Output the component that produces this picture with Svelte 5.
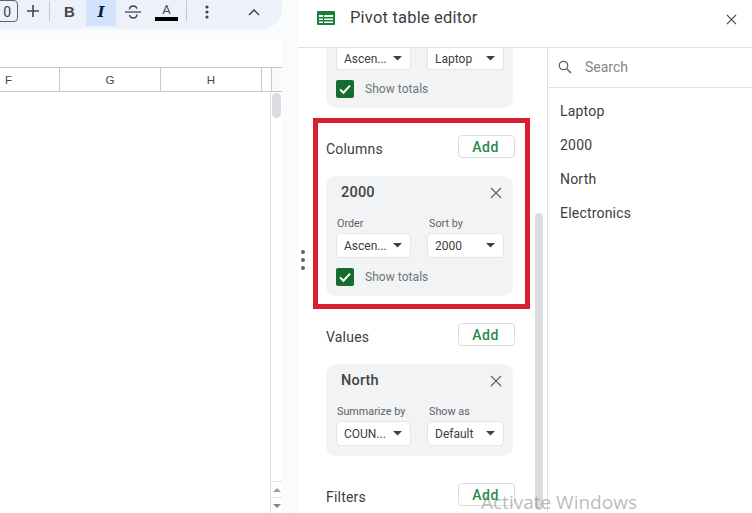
<script>
  const cols = [
    { name: 'F', cls: 'cf' },
    { name: 'G', cls: 'cg' },
    { name: 'H', cls: 'cg' }
  ];
  const fields = ['Laptop', '2000', 'North', 'Electronics'];
</script>

{#snippet caret()}
  <svg class="caret" width="9" height="4.500" viewBox="0 0 10 5"><path d="M0 0h10L5 5z" fill="#3c4043" /></svg>
{/snippet}

{#snippet select(text, cls)}
  <div class="select {cls}"><span>{text}</span>{@render caret()}</div>
{/snippet}

{#snippet totals()}
  <div class="totals">
    <span class="check">
      <svg width="18" height="18" viewBox="0 0 18 18"><path d="M4 9.400l3.400 3.400L14 5.600" fill="none" stroke="#fff" stroke-width="2" /></svg>
    </span>
    <span class="totals-label">Show totals</span>
  </div>
{/snippet}

{#snippet cross(size, col)}
  <svg width={size} height={size} viewBox="0 0 12 12"><path d="M1 1l10 10M11 1L1 11" fill="none" stroke={col} stroke-width="1.200" /></svg>
{/snippet}

<div class="page">
  <div class="sheet">
    <div class="toolbar">
      <span class="fontsize">0</span>
      <svg class="plus" width="12" height="12" viewBox="0 0 12 12"><path d="M6 0v12M0 6h12" stroke="#444746" stroke-width="1.600" /></svg>
      <span class="sep s1"></span>
      <span class="tb bold">B</span>
      <span class="tb italic">I</span>
      <svg class="strike" width="18" height="16" viewBox="0 0 18 16"><path d="M0 8h16" stroke="#444746" stroke-width="1.300" /><path d="M4.500 5.500C4.800 3 6.500 2 8.200 2s3.200.8 3.700 2.600M12 10.500c-.2 2.200-1.800 3.500-3.800 3.500S4.800 12.800 4.500 11" fill="none" stroke="#444746" stroke-width="1.500" /></svg>
      <span class="color"><span class="a">A</span><span class="bar"></span></span>
      <span class="sep s2"></span>
      <svg class="more" width="4" height="14" viewBox="0 0 4 14"><circle cx="2" cy="2" r="1.600" fill="#444746" /><circle cx="2" cy="7" r="1.600" fill="#444746" /><circle cx="2" cy="12" r="1.600" fill="#444746" /></svg>
      <svg class="up" width="12" height="7" viewBox="0 0 12 7"><path d="M1 6l5-5 5 5" fill="none" stroke="#444746" stroke-width="1.500" /></svg>
    </div>
    <div class="grid">
      <div class="formula"></div>
      <div class="headers">
        {#each cols as c}
          <div class="col {c.cls}">{c.name}</div>
        {/each}
        <div class="col-rest"></div>
      </div>
      <div class="cells">
        <div class="cells-main"></div>
        <div class="vscroll">
          <div class="track"><div class="thumb"></div></div>
          <div class="arrow"><svg width="8" height="4" viewBox="0 0 8 4"><path d="M0 4h8L4 0z" fill="#9aa0a6" /></svg></div>
          <div class="arrow"><svg width="8" height="4" viewBox="0 0 8 4"><path d="M0 0h8L4 4z" fill="#80868b" /></svg></div>
        </div>
      </div>
    </div>
  </div>

  <div class="panel">
    <header class="panel-head">
      <svg class="logo" width="18" height="14" viewBox="0 0 18 14">
        <rect width="18" height="14" rx="1" fill="#188038" />
        <path d="M2 4h14v2H2zM2 7.500h14v1.500H2zM2 10.500h14V12H2z" fill="#fff" />
        <path d="M6 4h1.200v8H6z" fill="#188038" />
      </svg>
      <h1>Pivot table editor</h1>
      <span class="close">{@render cross(11, '#3c4043')}</span>
    </header>
    <div class="panel-body">
      <div class="editor">
        <div class="card first">
          <div class="pair">
            {@render select('Ascen...', 'wa')}
            {@render select('Laptop', 'wb')}
          </div>
          {@render totals()}
        </div>

        <section class="marked">
          <div class="sec-head">
            <span class="sec-title">Columns</span>
            <button class="add">Add</button>
          </div>
          <div class="card">
            <div class="card-title"><b>2000</b><span class="x">{@render cross(12, '#5f6368')}</span></div>
            <div class="labels"><span class="la">Order</span><span>Sort by</span></div>
            <div class="pair">
              {@render select('Ascen...', 'wa')}
              {@render select('2000', 'wb')}
            </div>
            {@render totals()}
          </div>
        </section>

        <section class="values">
          <div class="sec-head">
            <span class="sec-title">Values</span>
            <button class="add">Add</button>
          </div>
          <div class="card short">
            <div class="card-title"><b>North</b><span class="x">{@render cross(12, '#5f6368')}</span></div>
            <div class="labels"><span class="la">Summarize by</span><span>Show as</span></div>
            <div class="pair">
              {@render select('COUN...', 'wa')}
              {@render select('Default', 'wb')}
            </div>
          </div>
        </section>

        <section class="filters">
          <div class="sec-head">
            <span class="sec-title">Filters</span>
            <button class="add">Add</button>
          </div>
        </section>

        <div class="sb"></div>
      </div>
      <aside class="fields">
        <div class="search">
          <svg width="14" height="14" viewBox="0 0 14 14"><circle cx="5.500" cy="5.500" r="4.200" fill="none" stroke="#5f6368" stroke-width="1.300" /><path d="M8.700 8.700L13 13" stroke="#5f6368" stroke-width="1.500" /></svg>
          <span>Search</span>
        </div>
        <ul>
          {#each fields as f}
            <li>{f}</li>
          {/each}
        </ul>
      </aside>
    </div>
  </div>

  <div class="handle"><i></i><i></i><i></i></div>
  <div class="watermark">Activate Windows</div>
</div>

<style>
  :global(body) { margin: 0; background: #fff; }
  .page {
    position: relative;
    width: 752px;
    height: 513px;
    display: flex;
    overflow: hidden;
    font-family: Roboto, "Liberation Sans", sans-serif;
    color: #3c4043;
  }
  .sheet {
    width: 298px;
    flex: none;
    background: #f9fbfd;
    display: flex;
    flex-direction: column;
  }
  .toolbar {
    position: relative;
    width: 282px;
    height: 29px;
    box-sizing: border-box;
    background: #edf2fa;
    border-bottom-right-radius: 20px;
    flex: none;
  }
  .toolbar > * { position: absolute; }
  .fontsize {
    left: -13px;
    top: 0;
    width: 31px;
    height: 22px;
    box-sizing: border-box;
    border: 1px solid #5f6368;
    border-radius: 4px;
    font-size: 14px;
    line-height: 22px;
    text-align: right;
    padding-right: 6px;
    color: #3c4043;
  }
  .plus { left: 27px; top: 5px; }
  .sep { width: 1px; height: 20px; background: #c7c7c7; top: 1px; }
  .s1 { left: 49px; }
  .s2 { left: 186px; }
  .tb { font-family: "Liberation Sans", sans-serif; font-weight: 700; }
  .bold { left: 64px; top: 3px; font-size: 15px; color: #444746; }
  .italic {
    left: 86px;
    top: 0;
    width: 30px;
    height: 26px;
    background: #d3e3fd;
    color: #041e49;
    font-style: italic;
    font-family: "DejaVu Serif", serif;
    font-size: 15px;
    line-height: 24px;
    text-align: center;
  }
  .strike { left: 125px; top: 4px; }
  .color { left: 155px; top: 3px; width: 23px; text-align: center; }
  .a { display: block; font-size: 13px; line-height: 14px; color: #444746; }
  .bar { display: block; height: 4px; background: #000; margin-top: 0; }
  .more { left: 205px; top: 5px; }
  .up { left: 248px; top: 9px; }
  .grid {
    width: 282px;
    flex: 1;
    display: flex;
    flex-direction: column;
    background: #fff;
    margin-top: 11px;
    min-height: 0;
  }
  .formula { height: 27px; flex: none; border-bottom: 1px solid #c7c7c7; box-sizing: content-box; margin-bottom: 0; }
  .headers {
    height: 23px;
    display: flex;
    flex: none;
    border-bottom: 1px solid #c7c7c7;
    font-size: 11px;
    color: #444746;
  }
  .col {
    box-sizing: border-box;
    border-right: 1px solid #c7c7c7;
    line-height: 24px;
    text-align: center;
    font-family: "Liberation Sans", sans-serif;
    font-size: 11.500px;
  }
  .cf { width: 60px; padding-right: 42px; }
  .cg { width: 101px; }
  .col-rest { flex: 1; background: linear-gradient(90deg, #fff 9px, #c7c7c7 9px, #c7c7c7 10px, #f8f9fa 10px); }
  .cells { flex: 1; display: flex; min-height: 0; }
  .cells-main { flex: 1; }
  .vscroll {
    width: 11px;
    border-left: 1px solid #dadce0;
    display: flex;
    flex-direction: column;
  }
  .track { flex: 1; padding: 1px 0 0 1px; }
  .thumb { width: 9px; height: 25px; border-radius: 5px; background: #dadce0; }
  .arrow {
    height: 15px;
    border-top: 1px solid #e0e0e0;
    display: flex;
    align-items: center;
    justify-content: center;
  }
  .panel { flex: 1; display: flex; flex-direction: column; min-width: 0; }
  .panel-head {
    height: 35px;
    flex: none;
    display: flex;
    align-items: center;
    padding: 0 15px 12px 19px;
    border-bottom: 1px solid #e0e0e0;
    box-sizing: content-box;
  }
  .logo { margin-right: 15px; }
  h1 { margin: 0; font-size: 16.500px; font-weight: 400; flex: 1; color: #3c4043; letter-spacing: 0.200px; }
  .close { display: flex; margin-top: 4px; }
  .panel-body { flex: 1; display: flex; min-height: 0; }
  .editor {
    position: relative;
    width: 250px;
    flex: none;
    box-sizing: border-box;
    border-right: 1px solid #e0e0e0;
    padding-left: 28px;
    overflow: hidden;
  }
  .card {
    width: 187px;
    box-sizing: border-box;
    background: #f1f3f4;
    border-radius: 10px;
    padding: 8px 9px 10px 10px;
  }
  .first { height: 60px; border-radius: 0 0 10px 10px; padding: 0 9px 0 10px; }
  .first .select { height: 22px; border-radius: 0 0 4px 4px; border-top: 0; }
  .short { height: 92px; }
  .card-title { display: flex; justify-content: space-between; align-items: center; padding: 0 2px 0 5px; height: 16px; font-size: 14.500px; color: #3c4043; }
  .card-title b { font-weight: 500; letter-spacing: 0.200px; color: #444; }
  .x { display: flex; margin-top: 2px; }
  .labels { display: flex; font-size: 10.800px; color: #5f6368; margin-top: 17px; height: 13px; line-height: 13px; padding-left: 1px; }
  .la { width: 92px; }
  .pair { display: flex; gap: 16px; margin-top: 0; }
  .labels + .pair { margin-top: 3px; }
  .select {
    height: 25px;
    box-sizing: border-box;
    display: flex;
    align-items: center;
    justify-content: space-between;
    background: #fff;
    border: 1px solid #e3e5e8;
    border-radius: 5px;
    padding: 0 8px 0 7px;
    font-size: 12px;
    color: #3c4043;
  }
  .wa { width: 75px; }
  .wb { width: 77px; }
  .totals { display: flex; align-items: center; margin-top: 10px; height: 18px; }
  .check { width: 18px; height: 18px; border-radius: 2px; background: #146c2e; display: block; }
  .check svg { display: block; }
  .totals-label { font-size: 12px; color: #70757a; margin-left: 11px; letter-spacing: 0.050px; }
  .marked {
    width: 217px;
    height: 191px;
    box-sizing: border-box;
    margin: 10px 0 0 -13px;
    padding: 12px 0 0 8px;
    border: 5px solid #d91f2e;
  }
  .sec-head {
    display: flex;
    align-items: center;
    justify-content: space-between;
    width: 189px;
    height: 23px;
  }
  .sec-title { font-size: 14px; font-weight: 400; color: #3c4043; letter-spacing: 0.200px; position: relative; top: 2px; }
  .add {
    width: 57px;
    height: 23px;
    box-sizing: border-box;
    background: #fff;
    border: 1px solid #dadce0;
    border-radius: 4px;
    padding: 0 2px 0 0;
    font: 500 14px Roboto, sans-serif;
    letter-spacing: 0.500px;
    color: #2b8a4c;
  }
  .marked .sec-head { margin-bottom: 18px; }
  .values { margin-top: 14px; }
  .values .sec-head { margin-bottom: 18px; }
  .filters { margin-top: 27px; }
  .sb {
    position: absolute;
    left: 237px;
    top: 165px;
    width: 8px;
    height: 297px;
    border-radius: 4px;
    background: #dadce0;
  }
  .fields { flex: 1; min-width: 0; }
  .search {
    height: 40px;
    display: flex;
    align-items: center;
    gap: 13px;
    padding: 0 0 2px 10px;
    box-sizing: border-box;
    border-bottom: 1px solid #e0e0e0;
    font-size: 14px;
    color: #80868b;
  }
  ul { list-style: none; margin: 0; padding: 7px 0 0 12px; }
  li { height: 34px; line-height: 32px; font-size: 14px; color: #3c4043; letter-spacing: 0.200px; }
  .handle {
    position: absolute;
    left: 301px;
    top: 250px;
    display: flex;
    flex-direction: column;
    gap: 4px;
  }
  .handle i { width: 4px; height: 4px; border-radius: 50%; background: #5f6368; display: block; }
  .watermark {
    position: absolute;
    left: 481px;
    top: 491px;
    font-family: "Open Sans", sans-serif;
    font-size: 19px;
    line-height: 22px;
    color: rgba(120, 120, 120, 0.5);
    white-space: nowrap;
  }
</style>
